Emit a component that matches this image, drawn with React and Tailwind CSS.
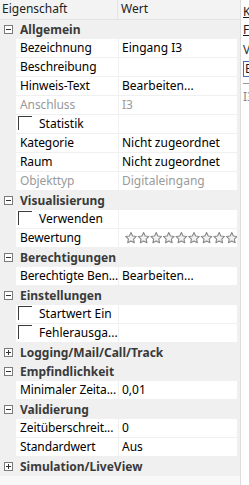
import React from "react";

const rows = [
  { cat: true, label: "Allgemein", open: true },
  { label: "Bezeichnung", value: "Eingang I3" },
  { label: "Beschreibung", value: "" },
  { label: "Hinweis-Text", value: "Bearbeiten..." },
  { label: "Anschluss", value: "I3", disabled: true },
  { label: "Statistik", check: true },
  { label: "Kategorie", value: "Nicht zugeordnet" },
  { label: "Raum", value: "Nicht zugeordnet" },
  { label: "Objekttyp", value: "Digitaleingang", disabled: true },
  { cat: true, label: "Visualisierung", open: true },
  { label: "Verwenden", check: true },
  { label: "Bewertung", stars: true },
  { cat: true, label: "Berechtigungen", open: true },
  { label: "Berechtigte Ben...", value: "Bearbeiten..." },
  { cat: true, label: "Einstellungen", open: true },
  { label: "Startwert Ein", check: true },
  { label: "Fehlerausga...", check: true },
  { cat: true, label: "Logging/Mail/Call/Track", open: false },
  { cat: true, label: "Empfindlichkeit", open: true },
  { label: "Minimaler Zeita...", value: "0,01" },
  { cat: true, label: "Validierung", open: true },
  { label: "Zeitüberschreit...", value: "0" },
  { label: "Standardwert", value: "Aus" },
  { cat: true, label: "Simulation/LiveView", open: false },
];

const ExpandBox = ({ open }) => (
  <svg width="9" height="9" viewBox="0 0 9 9" className="block">
    <rect x="0.5" y="0.5" width="8" height="8" fill="#fff" stroke="#7a7a7a" />
    <line x1="2" y1="4.5" x2="7" y2="4.5" stroke="#333" />
    {!open && <line x1="4.5" y1="2" x2="4.5" y2="7" stroke="#333" />}
  </svg>
);

// five-point star around (cx, 6)
const starPoints = (cx) => {
  const pts = [];
  for (let i = 0; i < 10; i++) {
    const r = i % 2 === 0 ? 5.6 : 2.7;
    const a = (Math.PI / 5) * i - Math.PI / 2;
    pts.push(`${(cx + r * Math.cos(a)).toFixed(2)},${(6.2 + r * Math.sin(a)).toFixed(2)}`);
  }
  return pts.join(" ");
};

const Stars = () => (
  <svg width="120" height="12" viewBox="0 0 120 12" className="block shrink-0">
    {Array.from({ length: 9 }).map((_, i) => (
      <polygon key={i} points={starPoints(6 + i * 12.6)} fill="#f2f2f2" stroke="#878787" strokeWidth="1.1" strokeLinejoin="round" />
    ))}
  </svg>
);

const Row = ({ row }) => {
  if (row.cat) {
    return (
      <div className="flex h-[19px] items-center bg-[#f0f0f0]">
        <div className="flex w-[16px] justify-center pl-[1px]">
          <ExpandBox open={row.open} />
        </div>
        <span className="pl-[4px] font-bold text-[#3a3a3a] whitespace-nowrap">{row.label}</span>
      </div>
    );
  }
  return (
    <div className="flex h-[19px]">
      <div className="w-[16px] shrink-0 bg-[#f0f0f0]" />
      <div className="flex w-[102px] shrink-0 items-start border-b border-[#f0f0f0] bg-white overflow-hidden">
        {row.check ? (
          <>
            <span className="mt-[1px] ml-[2px] h-[14px] w-[14px] shrink-0 border-t border-l border-[#3c3c3c]" />
            <span className="pl-[7px] leading-[18px] whitespace-nowrap">{row.label}</span>
          </>
        ) : (
          <span className={`pl-[4px] leading-[18px] whitespace-nowrap tracking-[-0.1px] ${row.disabled ? "text-[#9a9a9a]" : "text-black"}`}>
            {row.label}
          </span>
        )}
      </div>
      <div className="w-px shrink-0 bg-[#f0f0f0]" />
      <div className="flex flex-1 items-center overflow-hidden border-b border-[#f0f0f0] bg-white pl-[3px]">
        {row.stars ? (
          <div className="pl-[3px]"><Stars /></div>
        ) : (
          <span className={`leading-[18px] whitespace-nowrap ${row.disabled ? "text-[#9a9a9a]" : "text-black"}`}>
            {row.value}
          </span>
        )}
      </div>
    </div>
  );
};

export default function App() {
  return (
    <div className="flex h-[485px] w-[249px] overflow-hidden bg-white font-['Noto_Sans',sans-serif] text-[12px] text-black">
      <div className="flex w-[240px] shrink-0 flex-col bg-[#f0f0f0]">
        <div className="flex h-[20px] shrink-0 border-b border-[#e2e2e2] bg-[#f3f3f3] text-[#222]">
          <div className="w-[118px] shrink-0 border-r border-[#e2e2e2] pl-[2px] leading-[18px]">Eigenschaft</div>
          <div className="pl-[3px] leading-[18px]">Wert</div>
        </div>
        <div className="flex flex-col pr-[3px]">
          {rows.map((row, i) => (
            <Row key={i} row={row} />
          ))}
        </div>
        <div className="flex-1 bg-[#f8f8f8]" />
      </div>
      <div className="w-px shrink-0 bg-[#dcdcdc]" />
      <div className="flex flex-1 flex-col overflow-hidden bg-white pl-[2px] text-[12px] whitespace-nowrap">
        <span className="mt-[3px] leading-[18px] underline text-[#1a1a1a]">Kontakt</span>
        <span className="leading-[18px] underline text-[#1a1a1a]">Funktion</span>
        <span className="mt-[2px] leading-[18px] text-[#333]">Verknüpfung</span>
        <span className="mt-[2px] h-[16px] w-[30px] border border-[#3b6fb6] pl-px leading-[14px] text-[#1a1a1a]">Eingang</span>
        <span className="mt-[6px] h-px w-[20px] bg-[#999]" />
        <span className="mt-[4px] leading-[18px] text-[#888]">I3</span>
      </div>
    </div>
  );
}
